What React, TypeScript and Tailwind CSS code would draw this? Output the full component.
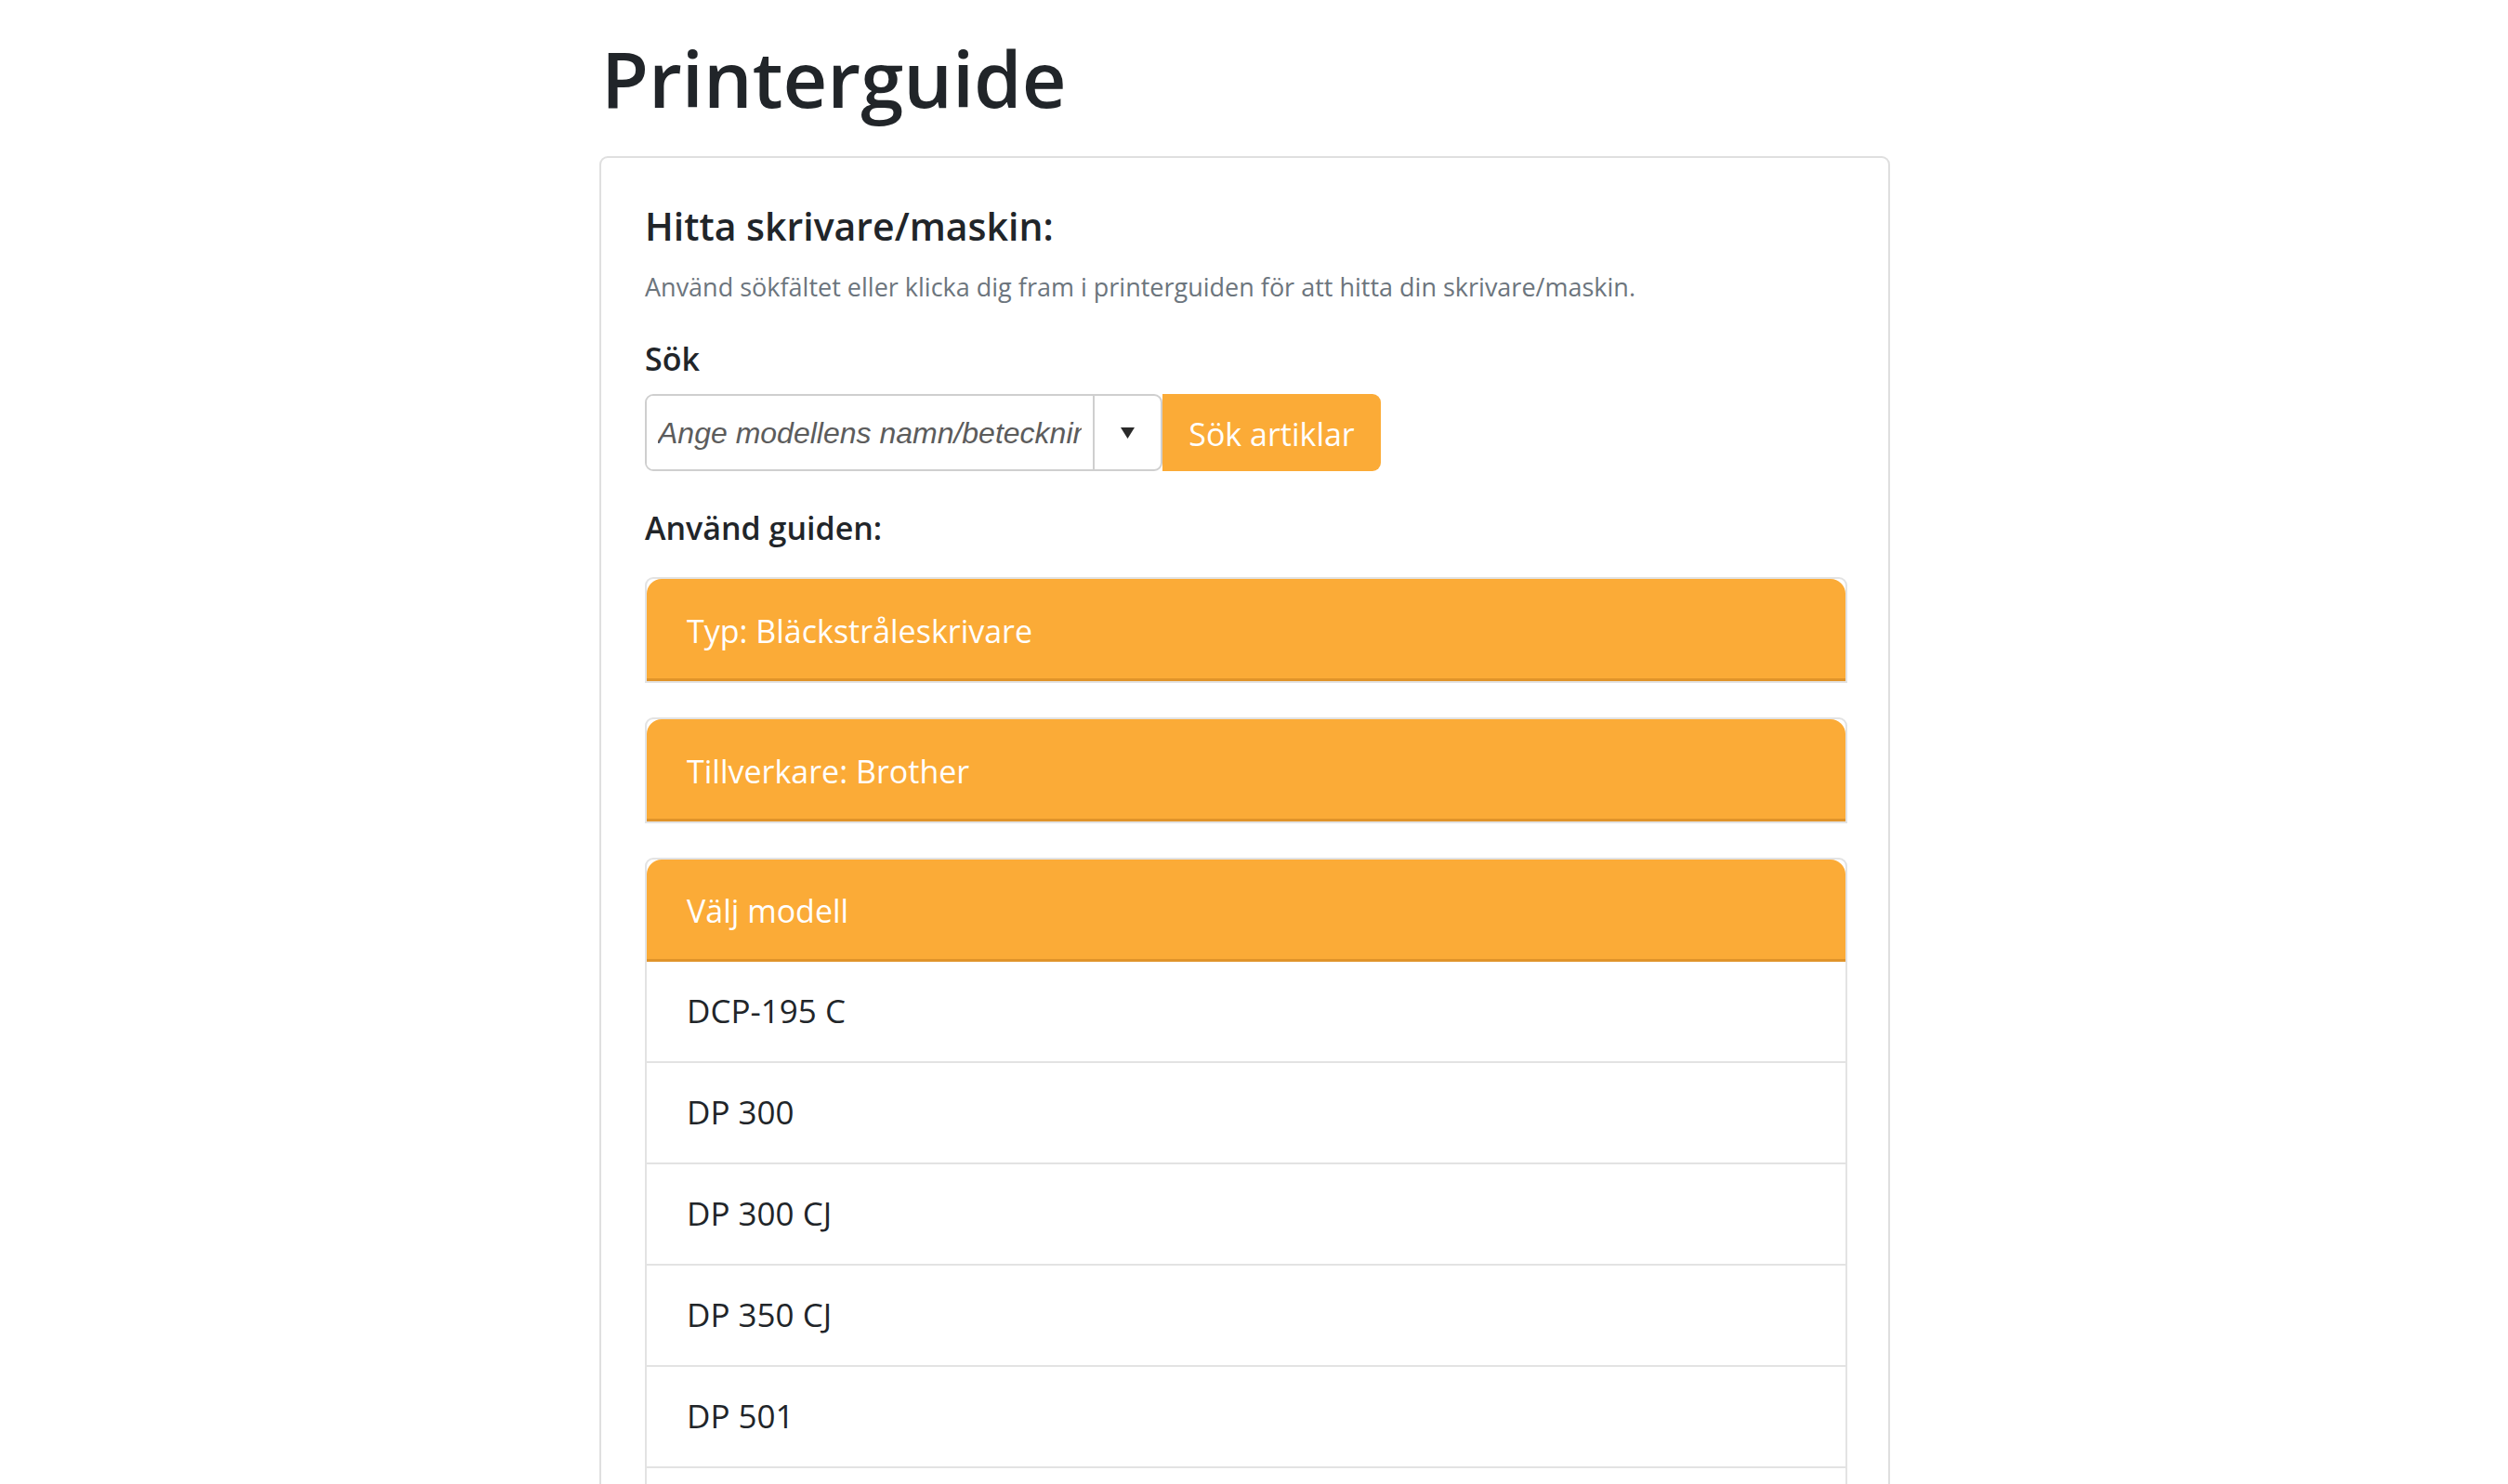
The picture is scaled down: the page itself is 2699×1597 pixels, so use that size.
import { useState } from "react";

const models = [
  "DCP-195 C",
  "DP 300",
  "DP 300 CJ",
  "DP 350 CJ",
  "DP 501",
  "DP 525 CJ",
  "DP 530 CJ",
];

const GuideStep = ({ label }: { label: string }) => (
  <div className="mb-[37px] rounded-t-[9px] border-2 border-[#e3e3e3]">
    <div className="flex h-[110px] items-center rounded-t-[16px] border-b-[3px] border-[#e0942a] bg-[#fbab37] px-[43px] pt-[5px] text-[34px] text-white">
      {label}
    </div>
  </div>
);

const App = () => {
  const [query, setQuery] = useState("");

  return (
    <div className="min-h-screen bg-white font-['Open_Sans',sans-serif] text-[#212529]">
      <div className="ml-[645px] w-[1389px] pt-[30px]">
        <h1 className="mb-[30px] pl-[2px] text-[83px] font-semibold leading-[108px]">
          Printerguide
        </h1>

        <div className="rounded-[9px] border-2 border-[#dfdfdf] pb-[40px] pl-[47px] pr-[44px] pt-[46px]">
          <h5 className="text-[41px] font-semibold leading-[54px]">
            Hitta skrivare/maskin:
          </h5>
          <p className="mt-[19px] text-[27px] leading-[39px] text-[#6c757d]">
            Använd sökfältet eller klicka dig fram i printerguiden för att hitta
            din skrivare/maskin.
          </p>

          <label className="mt-[31px] block text-[34px] font-semibold leading-[54px]">
            Sök
          </label>
          <div className="mt-[11px] flex h-[83px]">
            <div className="flex w-[557px] overflow-hidden rounded-[9px] border-2 border-[#cfcfcf]">
              <input
                value={query}
                onChange={(e) => setQuery(e.target.value)}
                placeholder="Ange modellens namn/beteckning"
                className="w-[482px] border-r-2 border-[#cfcfcf] bg-white px-[12px] font-['Liberation_Sans',Arial,sans-serif] text-[32px] outline-none placeholder:italic placeholder:text-[#5c5c5c]"
              />
              <div className="flex flex-1 items-center justify-center">
                <svg width="15" height="12" viewBox="0 0 15 12">
                  <path d="M0 0 H15 L7.5 12 Z" fill="#2a2a2a" />
                </svg>
              </div>
            </div>
            <button className="w-[235px] rounded-r-[9px] bg-[#fbab37] pt-[3px] text-[34px] text-white">
              Sök artiklar
            </button>
          </div>

          <div className="mt-[34px] text-[34px] font-semibold leading-[54px]">
            Använd guiden:
          </div>

          <div className="mt-[26px]">
            <GuideStep label="Typ: Bläckstråleskrivare" />
            <GuideStep label="Tillverkare: Brother" />

            <div className="rounded-[9px] border-2 border-[#e3e3e3]">
              <div className="flex h-[110px] items-center rounded-t-[16px] border-b-[3px] border-[#e0942a] bg-[#fbab37] px-[43px] pt-[3px] text-[34px] text-white">
                Välj modell
              </div>
              {models.map((m) => (
                <div
                  key={m}
                  className="flex h-[109px] items-center border-b-2 border-[#e3e3e3] px-[43px] text-[35px] last:border-b-0"
                >
                  {m}
                </div>
              ))}
            </div>
          </div>
        </div>
      </div>
    </div>
  );
};

export default App;
